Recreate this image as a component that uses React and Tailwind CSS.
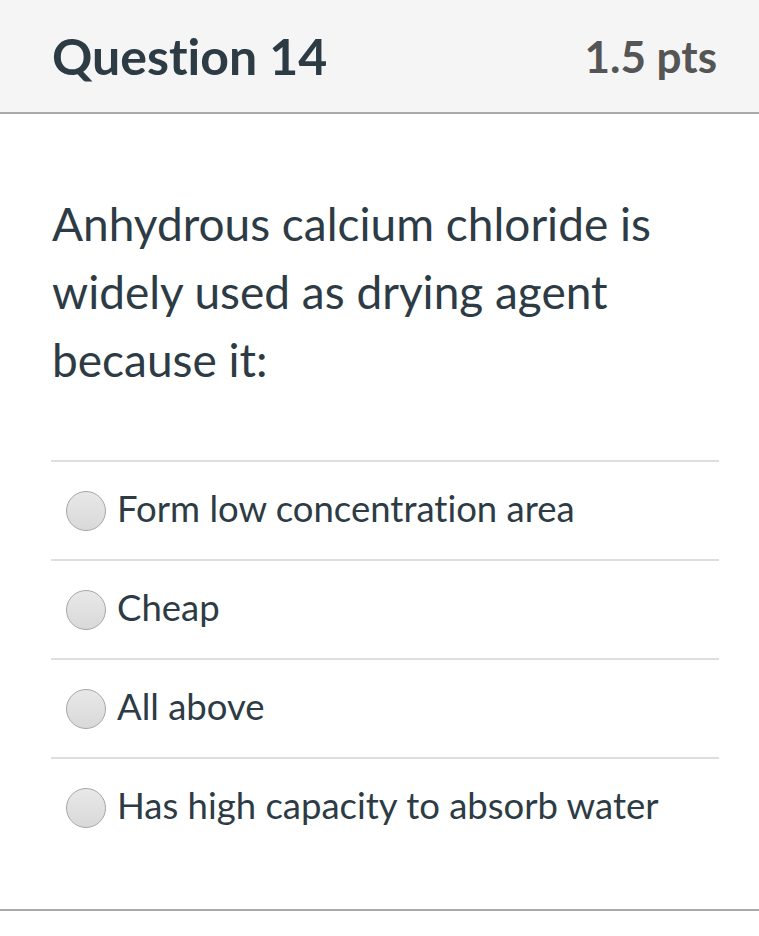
export default function App() {
  const options = [
    "Form low concentration area",
    "Cheap",
    "All above",
    "Has high capacity to absorb water",
  ];

  return (
    <div className="w-[759px] h-[936px] bg-white font-['Lato',sans-serif] text-[#2d3b45] [font-variant-ligatures:none]">
      <div className="h-[114px] bg-[#f5f5f5] border-b-2 border-[#a9a9a9] flex items-center justify-between pl-[52px] pr-[42px]">
        <h2 className="text-[50px] font-bold leading-none">Question 14</h2>
        <span className="text-[44px] font-bold leading-none text-[#555555]">1.5 pts</span>
      </div>

      <div className="h-[797px] border-b-2 border-[#a9a9a9] pl-[51px] pr-[40px]">
        <p className="pt-[76px] text-[46px] leading-[68px] pl-px">
          Anhydrous calcium chloride is widely used as drying agent because it:
        </p>

        <div className="mt-[66px]">
          {options.map((opt) => (
            <div
              key={opt}
              className="h-[99px] border-t-2 border-[#dedede] flex items-center gap-[11px] pl-[15px]"
            >
              <span className="w-[40px] h-[40px] rounded-full border border-[#a6a6a6] bg-gradient-to-b from-[#e8e8e8] to-[#d9d9d9] shrink-0" />
              <span className="text-[36.5px] leading-none -mt-[5px]">{opt}</span>
            </div>
          ))}
        </div>
      </div>
    </div>
  );
}
